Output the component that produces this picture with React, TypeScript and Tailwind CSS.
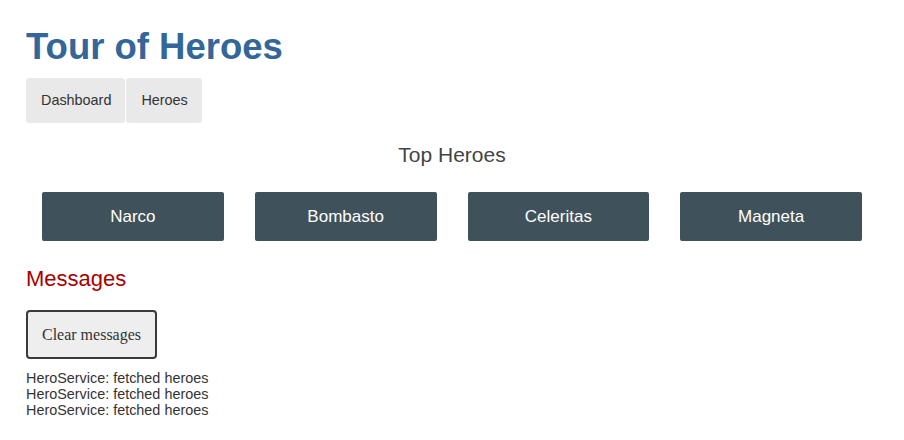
const heroes = ["Narco", "Bombasto", "Celeritas", "Magneta"];

const messages = [
  "HeroService: fetched heroes",
  "HeroService: fetched heroes",
  "HeroService: fetched heroes",
];

export default function App() {
  return (
    <div className="min-h-screen bg-white px-[26px] pt-[29px] font-['Liberation_Sans',Arial,sans-serif]">
      <h1 className="text-[36.5px] font-bold leading-[36px] text-[#336699]">
        Tour of Heroes
      </h1>

      <nav className="mt-[13px] flex">
        <a className="flex h-[45px] items-center rounded-[3px] bg-[#e9e9e9] pl-[15px] pr-[14px] text-[14.4px] text-[#333]">
          Dashboard
        </a>
        <a className="ml-px flex h-[45px] items-center rounded-[3px] bg-[#e9e9e9] pl-[15px] pr-[14px] text-[14.4px] text-[#333]">
          Heroes
        </a>
      </nav>

      <h2 className="mt-[20px] text-center text-[21px] leading-[24px] text-[#444]">
        Top Heroes
      </h2>

      <div className="mt-[25px] grid grid-cols-4 gap-[31px] px-4">
        {heroes.map((hero) => (
          <a
            key={hero}
            className="flex h-[49px] items-center justify-center rounded-[2px] bg-[#3f525c] text-[17px] text-white"
          >
            {hero}
          </a>
        ))}
      </div>

      <h2 className="mt-[25px] text-[22px] leading-[26px] text-[#a80000]">
        Messages
      </h2>

      <button
        type="button"
        className="mt-[18px] flex h-[49px] w-[131px] items-center justify-center rounded-[4px] border-2 border-[#3a3a3a] bg-[#eeeeee] font-['Liberation_Serif',Georgia,serif] text-[16px] text-[#333]"
      >
        Clear messages
      </button>

      <div className="mt-[11px] text-[14.4px] leading-[16px] text-[#333]">
        {messages.map((m, i) => (
          <div key={i}>{m}</div>
        ))}
      </div>
    </div>
  );
}
